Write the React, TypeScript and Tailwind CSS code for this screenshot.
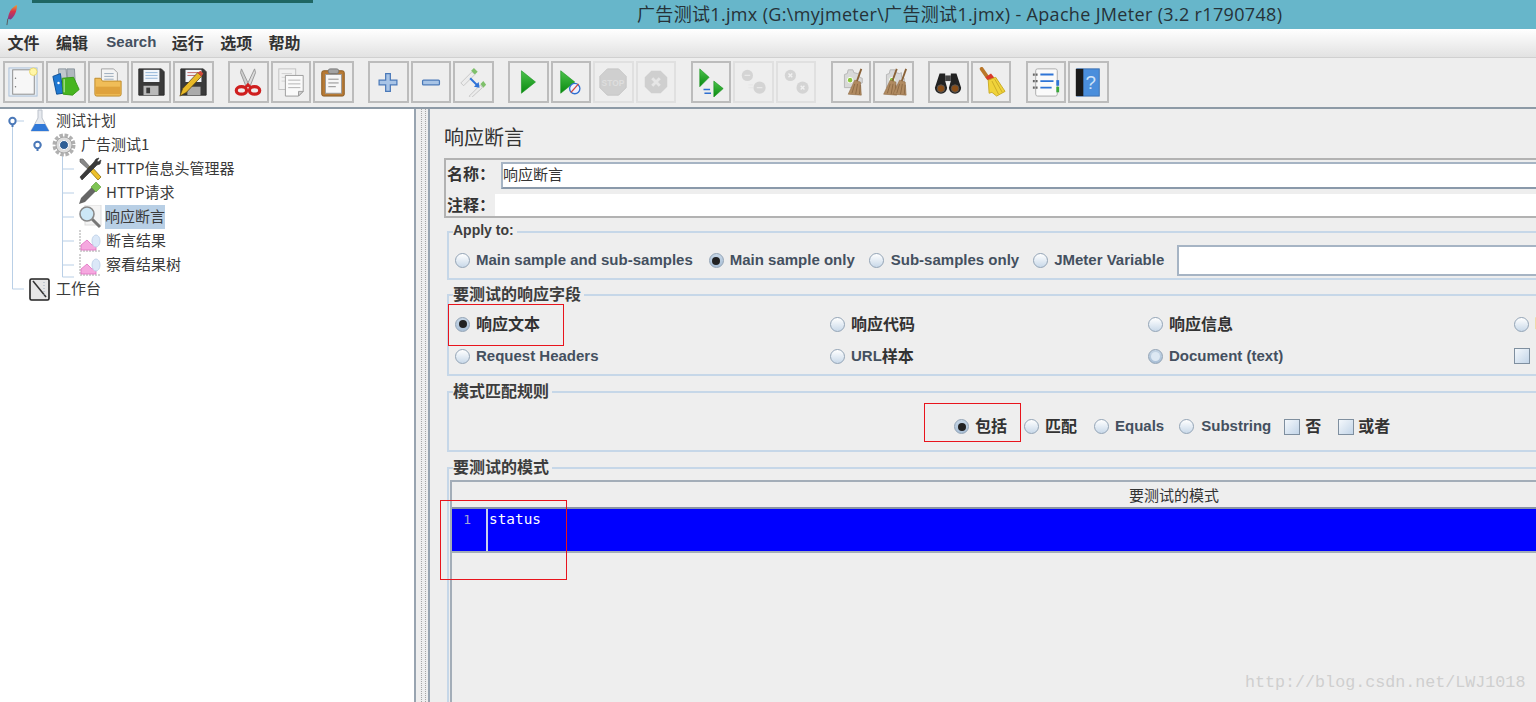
import React from 'react';

const cjk = "font-['Noto_Sans_CJK_SC','Liberation_Sans',sans-serif]";
const ui = "font-['Liberation_Sans','Noto_Sans_CJK_SC',sans-serif]";

/* ---------- toolbar icons, all on a 32 box ---------- */
const Gear = ({ c = '#d8d8d8' }: { c?: string }) => (
  <g>
    <path d="M9 8l3-1 1-4h5l1 3 4 1 2-1v5l3 1v5l-3 1v4H9z" fill={c} stroke="#b5b5b5" strokeWidth="1" />
    <circle cx="15" cy="14" r="3" fill="#8cc63f" stroke="#fff" />
  </g>
);

const Broom = ({ x = 0, c = '#b08a60' }: { x?: number; c?: string }) => (
  <g transform={`translate(${x} 0)`}>
    <path d="M27 2l-5 14" stroke="#8a6238" strokeWidth="2" />
    <path d="M20 14l6 2 1 14-14-1z" fill={c} stroke="#8d6a44" strokeWidth=".6" />
    <path d="M20 18l-3 10M23 18l-2 11M26 19l-1 10" stroke="#7d5c38" strokeWidth=".7" />
  </g>
);

const icons: Record<string, React.ReactNode> = {
  newPlan: (
    <>
      <rect x="1" y="1" width="30" height="30" fill="#e7edf3" stroke="#a9c0d8" />
      <rect x="5" y="3" width="23" height="26" fill="#f7f7f7" stroke="#8a8a8a" />
      <circle cx="8" cy="12" r=".8" fill="#777" />
      <circle cx="8" cy="21" r=".8" fill="#777" />
      <circle cx="27" cy="5" r="4" fill="#fff6a8" stroke="#e9d66a" />
    </>
  ),
  templates: (
    <>
      <path d="M8 2h8l2 20H9z" fill="#c2c8ce" stroke="#8a939c" />
      <path d="M17 2h8l1 18h-8z" fill="#b1b8bf" stroke="#8a939c" />
      <path d="M2 10l8-3 3 21-7 1z" fill="#1e78d2" stroke="#0d4f94" />
      <path d="M12 12l12-1 6 13-7 6-10-1z" fill="#47b51f" stroke="#3a9a18" />
      <path d="M14 13v14" stroke="#d5f0c4" />
      <circle cx="8" cy="17" r="1.3" fill="#fff" />
    </>
  ),
  open: (
    <>
      <path d="M9 2h13l4 4v11H9z" fill="#f4f4f4" stroke="#a0a0a0" />
      <path d="M12 7h10M12 10h10M12 13h10" stroke="#9ab" />
      <path d="M2 12h6l2 3h20v14a2 2 0 0 1-2 2H4a2 2 0 0 1-2-2z" fill="#f0bd58" stroke="#bd8a2a" />
      <path d="M3 21h26v8H3z" fill="#dfa23c" />
    </>
  ),
  save: (
    <>
      <path d="M3 2h24l3 3v25H3z" fill="#3a3a3a" stroke="#2a2a2a" />
      <rect x="8" y="3" width="17" height="13" fill="#f2f6fb" />
      <path d="M10 6h13M10 9h13M10 12h13" stroke="#8fb2d6" />
      <rect x="8" y="20" width="16" height="10" fill="#b9b9b9" />
      <rect x="11" y="22" width="4" height="6" fill="#3a3a3a" />
    </>
  ),
  saveAs: (
    <>
      <path d="M3 2h24l3 3v25H3z" fill="#3a3a3a" stroke="#2a2a2a" />
      <rect x="8" y="3" width="17" height="13" fill="#f2f6fb" />
      <path d="M10 6h13M10 9h13" stroke="#c06060" />
      <rect x="10" y="21" width="14" height="9" fill="#aaa" />
      <path d="M2 31l3-8L21 6l4 4L9 27z" fill="#e8b928" stroke="#5c4510" strokeWidth=".8" />
      <path d="M21 6l4 4 2-3-3-3z" fill="#d04a3a" />
    </>
  ),
  cut: (
    <>
      <path d="M9 2l8 17-3 2L8 6z" fill="#cfcfcf" stroke="#969696" />
      <path d="M23 2l-8 17 3 2 6-15z" fill="#dcdcdc" stroke="#969696" />
      <ellipse cx="9" cy="25" rx="5.500" ry="4" fill="none" stroke="#cf1f1f" strokeWidth="3.4" />
      <ellipse cx="23" cy="25" rx="5.500" ry="4" fill="none" stroke="#cf1f1f" strokeWidth="3.4" />
      <path d="M13 22l3-3 3 3" stroke="#cf1f1f" strokeWidth="3" fill="none" />
    </>
  ),
  copy: (
    <>
      <rect x="3" y="2" width="18" height="22" fill="#f1f1f1" stroke="#c0c0c0" />
      <path d="M6 7h11M6 11h11M6 15h11" stroke="#d0d0d0" />
      <path d="M10 9h19v17l-5 5H10z" fill="#fafafa" stroke="#9a9a9a" />
      <path d="M13 14h13M13 18h13M13 22h13" stroke="#b0b0b0" />
      <path d="M24 31v-5h5z" fill="#d0d0d0" stroke="#9a9a9a" />
    </>
  ),
  paste: (
    <>
      <rect x="4" y="4" width="24" height="27" rx="2" fill="#b77a35" stroke="#85571f" />
      <rect x="8" y="8" width="17" height="20" fill="#f7f7f7" stroke="#999" />
      <path d="M11 13h11M11 17h11M11 21h8" stroke="#8a8a8a" />
      <rect x="11" y="2" width="11" height="5" rx="2" fill="#a3a3a3" stroke="#777" />
    </>
  ),
  plus: <path d="M13.500 7h5v7h7v5h-7v7h-5v-7h-7v-5h7z" fill="#a8c4e6" stroke="#4a79b8" strokeWidth="1.300" />,
  minus: <rect x="7" y="14" width="18" height="5" rx="1" fill="#a8c4e6" stroke="#4a79b8" strokeWidth="1.300" />,
  toggle: (
    <>
      <path d="M3 17L15 5l3 3L6 20z" fill="#ececec" stroke="#c4c4c4" />
      <path d="M14 4l3-3 4 4-3 3z" fill="#7fc06b" />
      <path d="M12 31l12-12 2 3-12 11z" fill="#ececec" stroke="#c4c4c4" />
      <path d="M24 18l3-3 3 4-3 3z" fill="#7fc06b" />
      <path d="M13 12l8 8" stroke="#2f73d8" strokeWidth="2" />
      <path d="M17 21l6 1-1-6z" fill="#2f73d8" />
    </>
  ),
  start: (
    <>
      <defs>
        <linearGradient id="g1" x1="0" y1="0" x2="0" y2="1">
          <stop offset="0" stopColor="#4cc34c" />
          <stop offset="1" stopColor="#0a8a10" />
        </linearGradient>
      </defs>
      <path d="M9 4l15 12L9 28z" fill="url(#g1)" stroke="#0f8f15" strokeWidth=".6" />
    </>
  ),
  startNoPause: (
    <>
      <path d="M5 4l15 12L5 28z" fill="url(#g1)" stroke="#0f8f15" strokeWidth=".6" />
      <circle cx="20" cy="23" r="5.500" fill="#eef" stroke="#2f6fd0" strokeWidth="1.400" />
      <path d="M16 27l8-9" stroke="#d0483a" strokeWidth="1.400" />
    </>
  ),
  stop: (
    <>
      <path d="M10 2h12l8 8v12l-8 8H10l-8-8V10z" fill="#cfcfcf" stroke="#c4c4c4" />
      <text x="16" y="20" textAnchor="middle" fontSize="9" fontWeight="700" fill="#dedede" fontFamily="Liberation Sans">STOP</text>
    </>
  ),
  shutdown: (
    <>
      <path d="M11 4h10l7 7v10l-7 7H11l-7-7V11z" fill="#cfcfcf" />
      <path d="M12 12l8 8M20 12l-8 8" stroke="#e6e6e6" strokeWidth="3" />
    </>
  ),
  remoteStart: (
    <>
      <path d="M4 2l10 9-10 10z" fill="url(#g1)" stroke="#0f8f15" strokeWidth=".6" />
      <path d="M19 15l10 8-10 9z" fill="url(#g1)" stroke="#0f8f15" strokeWidth=".6" />
      <path d="M8 24h7M16 28H9" stroke="#2f6fd0" strokeWidth="1.800" />
    </>
  ),
  remoteStop: (
    <>
      <circle cx="10" cy="9" r="6" fill="#d4d4d4" />
      <circle cx="23" cy="22" r="6.500" fill="#d4d4d4" />
      <path d="M7 9h6M20 22h6M11 19h5M11 22h5" stroke="#e8e8e8" strokeWidth="1.400" />
    </>
  ),
  remoteShutdown: (
    <>
      <circle cx="10" cy="9" r="6" fill="#d4d4d4" />
      <circle cx="23" cy="22" r="6.500" fill="#d4d4d4" />
      <path d="M8 7l4 4M12 7l-4 4M21 20l4 4M25 20l-4 4" stroke="#f0f0f0" strokeWidth="1.500" />
    </>
  ),
  clear: (
    <>
      <Gear />
      <Broom />
    </>
  ),
  clearAll: (
    <>
      <Gear />
      <Broom x={-7} />
      <Broom x={3} />
    </>
  ),
  search: (
    <>
      <rect x="13" y="9" width="6" height="6" fill="#444" />
      <path d="M7 7h6v8l2 7a6.500 6.500 0 1 1-13 0z" fill="#222" />
      <path d="M25 7h-6v8l-2 7a6.500 6.500 0 1 0 13 0z" fill="#222" />
      <circle cx="8.500" cy="23" r="4" fill="#8a4d16" stroke="#555" />
      <circle cx="23.500" cy="23" r="4" fill="#8a4d16" stroke="#555" />
    </>
  ),
  broom: (
    <>
      <path d="M6 2l7 10" stroke="#b9772a" strokeWidth="4" strokeLinecap="round" />
      <path d="M10 11l6-4 4 5-5 4z" fill="#d83a2a" />
      <path d="M13 14l8-3 10 15-9 5-5-4-3 1z" fill="#f0d33a" stroke="#c9aa26" />
      <path d="M17 15l7 14M20 13l8 14" stroke="#c9aa26" />
    </>
  ),
  functions: (
    <>
      <rect x="5" y="2" width="23" height="29" rx="2" fill="#fafafa" stroke="#aaa" />
      <path d="M10 8h14M10 15h14M10 22h12" stroke="#2e74d6" strokeWidth="2" />
      <path d="M2 8h6M2 15h6M2 22h6" stroke="#666" strokeWidth="2.400" strokeDasharray="2 1" />
      <rect x="27" y="14" width="3" height="6" fill="#2e74d6" />
      <rect x="27" y="21" width="3" height="6" fill="#3aa83a" />
    </>
  ),
  help: (
    <>
      <rect x="4" y="2" width="24" height="29" fill="#4a8edc" stroke="#3a70b0" />
      <rect x="3" y="2" width="8" height="29" fill="#1a1a1a" />
      <text x="19" y="23" textAnchor="middle" fontSize="20" fill="#cfe3f8" fontFamily="Liberation Sans">?</text>
    </>
  ),
};

const toolbarGroups: { id: string; off?: boolean }[][] = [
  [{ id: 'newPlan' }, { id: 'templates' }, { id: 'open' }, { id: 'save' }, { id: 'saveAs' }],
  [{ id: 'cut' }, { id: 'copy' }, { id: 'paste' }],
  [{ id: 'plus' }, { id: 'minus' }, { id: 'toggle' }],
  [{ id: 'start' }, { id: 'startNoPause' }, { id: 'stop', off: true }, { id: 'shutdown', off: true }],
  [{ id: 'remoteStart' }, { id: 'remoteStop', off: true }, { id: 'remoteShutdown', off: true }],
  [{ id: 'clear' }, { id: 'clearAll' }],
  [{ id: 'search' }, { id: 'broom' }],
  [{ id: 'functions' }, { id: 'help' }],
];

const ToolButton = ({ id, off }: { id: string; off?: boolean }) => (
  <div className={`flex h-[42px] w-[40.5px] items-center justify-center border-2 bg-[#eeeeee] ${off ? 'border-[#e0e0e0]' : 'border-[#bcbcbc]'}`}>
    <svg viewBox="0 0 32 32" className="h-[30px] w-[30px]">{icons[id]}</svg>
  </div>
);

/* ---------- tree icons ---------- */
const Chart = () => (
  <svg viewBox="0 0 24 24" className="h-[24px] w-[24px]">
    <path d="M2 1v21h21" fill="none" stroke="#a5a5a5" strokeDasharray="2 1" />
    <path d="M3 21v-5l6-5 5 5 4-2v7z" fill="#f5a8df" stroke="#e070c0" strokeWidth=".8" />
    <ellipse cx="18" cy="12" rx="4" ry="6" fill="#dbe8f8" stroke="#c2d4ea" />
  </svg>
);

const treeIcons: Record<string, React.ReactNode> = {
  flask: (
    <svg viewBox="0 0 24 24" className="h-[24px] w-[24px]">
      <path d="M10 1h4v8l7 13H3l7-13z" fill="#e6e9ee" stroke="#bcc2cb" />
      <path d="M7 15h10l4 7H3z" fill="#2f78d8" />
    </svg>
  ),
  gear: (
    <svg viewBox="0 0 24 24" className="h-[24px] w-[24px]">
      <circle cx="12" cy="12" r="9.500" fill="none" stroke="#b0b0b0" strokeWidth="4" strokeDasharray="3.400 1.600" />
      <circle cx="12" cy="12" r="8" fill="#dcdcdc" stroke="#a5a5a5" />
      <circle cx="12" cy="12" r="4.500" fill="#2f5f96" stroke="#fff" />
    </svg>
  ),
  wrench: (
    <svg viewBox="0 0 24 24" className="h-[24px] w-[24px]">
      <path d="M2 2l3 0 8 9-2 2-9-8z" fill="#888" stroke="#555" strokeWidth=".6" />
      <path d="M11 10l2-1 10 11-3 3-10-11z" fill="#eec02a" stroke="#8a6d10" strokeWidth=".8" />
      <path d="M21 1l-3 1-2 3L2 20l2 3L19 8l3-1 1-4-3 2-1-1z" fill="#3a3a3a" stroke="#2a2a2a" strokeWidth=".6" />
    </svg>
  ),
  dropper: (
    <svg viewBox="0 0 24 24" className="h-[24px] w-[24px]">
      <path d="M1 23l2-6L14 6l4 4L7 21z" fill="#666" />
      <path d="M14 5l4-4 5 5-4 4-1 1-5-5z" fill="#7fc455" stroke="#5b9838" strokeWidth=".6" />
    </svg>
  ),
  glass: (
    <svg viewBox="0 0 24 24" className="h-[24px] w-[24px]">
      <rect x="7" y="0" width="16" height="20" fill="#f4f4f4" stroke="#ddd" />
      <path d="M14 14l8 8" stroke="#777" strokeWidth="3" />
      <circle cx="9" cy="9" r="7" fill="#cce7f6" stroke="#888" strokeWidth="1.600" />
    </svg>
  ),
  chart: <Chart />,
  note: (
    <svg viewBox="0 0 24 24" className="h-[24px] w-[24px]">
      <rect x="2" y="2" width="19" height="21" rx="1.500" fill="#e6e6e6" stroke="#222" strokeWidth="1.600" />
      <path d="M5 4l13 16" stroke="#333" strokeWidth="1.600" />
      <path d="M16 5v14" stroke="#9ab" strokeDasharray="1 2" />
    </svg>
  ),
};

const treeRows = [
  { icon: 'flask', label: '测试计划', iconX: 28, textX: 56 },
  { icon: 'gear', label: '广告测试1', iconX: 52, textX: 81 },
  { icon: 'wrench', label: 'HTTP信息头管理器', iconX: 78, textX: 106 },
  { icon: 'dropper', label: 'HTTP请求', iconX: 78, textX: 106 },
  { icon: 'glass', label: '响应断言', iconX: 78, textX: 105, selected: true },
  { icon: 'chart', label: '断言结果', iconX: 78, textX: 106 },
  { icon: 'chart', label: '察看结果树', iconX: 78, textX: 106 },
  { icon: 'note', label: '工作台', iconX: 28, textX: 56 },
];

const TreeRow = ({ icon, label, iconX, textX, selected }: (typeof treeRows)[number] & { selected?: boolean }) => (
  <div className="flex h-[24px] items-center" style={{ paddingLeft: iconX }}>
    <span className="w-[24px] shrink-0">{treeIcons[icon]}</span>
    <span
      className={`${cjk} h-[24px] text-[15px] leading-[21px] text-[#3a3a3a] ${selected ? 'bg-[#b8cfe5]' : ''}`}
      style={{ marginLeft: textX - iconX - 24 }}
    >
      {label}
    </span>
  </div>
);

/* ---------- form bits ---------- */
const Radio = ({ on, tint }: { on?: boolean; tint?: boolean }) => (
  <span
    className={`flex h-[15px] w-[15px] shrink-0 items-center justify-center rounded-full border border-[#93a4b6] bg-gradient-to-b ${
      on || tint ? 'from-[#c6d6e6] to-[#a9bfd6]' : 'from-[#ffffff] to-[#c9d9e9]'
    }`}
  >
    {on && <span className="h-[8px] w-[8px] rounded-full bg-[#222222]" />}
    {tint && <span className="h-[9px] w-[9px] rounded-full bg-[#dde8f3]" />}
  </span>
);

const Check = () => (
  <span className="block h-[16px] w-[16px] shrink-0 border border-[#7f8f9f] bg-gradient-to-br from-[#f4f8fc] to-[#c3d5e8]" />
);

const Label = ({ children, className = '' }: { children: React.ReactNode; className?: string }) => (
  <span className={`${ui} whitespace-nowrap text-[15px] font-bold text-[#44505f] ${className}`}>{children}</span>
);

const CjkLabel = ({ children }: { children: React.ReactNode }) => (
  <span className={`${cjk} inline-block -translate-y-[1.500px] whitespace-nowrap text-[16px] font-bold leading-[20px] text-[#333333]`}>{children}</span>
);

const Group = ({ title, className, children }: { title: string; className: string; children: React.ReactNode }) => (
  <div className={`relative w-[1490px] border-2 border-[#c6d7e8] ${className}`}>
    <span
      className={`${
        title === 'Apply to:' ? `${ui} text-[14px]` : `${cjk} text-[16px]`
      } absolute -top-[13px] left-[4px] bg-[#eeeeee] pr-[3px] font-bold leading-[20px] text-[#3d3d3d]`}
    >
      {title}
    </span>
    {children}
  </div>
);

export default function App() {
  return (
    <div className="relative flex h-[702px] w-[1536px] flex-col overflow-hidden bg-[#eeeeee]">
      {/* Title bar */}
      <div className="flex h-[29px] shrink-0 items-center bg-[#67b6ca] pl-[5px]">
        <svg viewBox="0 0 14 24" className="h-[22px] w-[13px]">
          <defs>
            <linearGradient id="feather" x1="0" y1="0" x2="0" y2="1">
              <stop offset="0" stopColor="#f0a030" />
              <stop offset=".45" stopColor="#d9344a" />
              <stop offset="1" stopColor="#7a3a90" />
            </linearGradient>
          </defs>
          <path d="M13 1C8 3 4 8 3 16l3 1c4-3 7-9 7-16z" fill="url(#feather)" />
          <path d="M3 16l-1 7" stroke="#555" />
        </svg>
        <span className="ml-[619px] whitespace-nowrap font-['Open_Sans','Noto_Sans_CJK_SC',sans-serif] text-[18px] tracking-[0.33px] text-[#263238]">
          广告测试1.jmx (G:\myjmeter\广告测试1.jmx) - Apache JMeter (3.2 r1790748)
        </span>
      </div>
      <div className="absolute left-[32px] top-0 h-[3px] w-[281px] bg-[#1f6663]" />

      {/* Menu */}
      <div className="flex h-[28px] shrink-0 items-center gap-[16.400px] bg-gradient-to-b from-[#ffffff] to-[#e2e2e2] pb-[2px] pl-[7.500px]">
        {['文件', '编辑'].map((m) => (
          <span key={m} className={`${cjk} text-[16px] font-bold text-[#333333]`}>{m}</span>
        ))}
        <span className={`${ui} ml-[2px] mr-[-1px] text-[15px] font-bold text-[#44505f]`}>Search</span>
        {['运行', '选项', '帮助'].map((m) => (
          <span key={m} className={`${cjk} text-[16px] font-bold text-[#333333]`}>{m}</span>
        ))}
      </div>

      {/* Toolbar */}
      <div className="flex h-[50px] shrink-0 items-center gap-[14.500px] border-t border-[#d0d0d0] bg-[#eeeeee] pb-[1px] pl-[3px]">
        {toolbarGroups.map((g, i) => (
          <div key={i} className="flex gap-[2px]">
            {g.map((b) => (
              <ToolButton key={b.id} id={b.id} off={b.off} />
            ))}
          </div>
        ))}
      </div>
      <div className="h-[2px] shrink-0 bg-[#8d9aa6]" />

      {/* Split pane */}
      <div className="flex min-h-0 flex-1">
        <div className="relative w-[416px] shrink-0 border-r-2 border-[#98a4b0] bg-white">
          <svg className="absolute left-0 top-0 h-[200px] w-[100px]" viewBox="0 0 100 200">
            <path d="M12.500 12v168H24M17 12h7M42 36h-4.500M62.500 36v132H74M62 60h12M62 84h12M62 108h12M62 132h12M62 156h12" fill="none" stroke="#b9cfe6" />
            <path d="M12.500 18v-6M37.500 42v-6" stroke="#4a78b8" strokeWidth="2" />
            <circle cx="12.500" cy="12" r="3.200" fill="#fff" stroke="#4a78b8" strokeWidth="2" />
            <circle cx="37.500" cy="36" r="3.200" fill="#fff" stroke="#4a78b8" strokeWidth="2" />
          </svg>
          <div className="relative">
            {treeRows.map((r, i) => (
              <TreeRow key={i} {...r} />
            ))}
          </div>
        </div>

        {/* Drag divider with a dotted grip */}
        <div className="flex w-[14px] shrink-0 justify-center border-r-2 border-[#98a4b0] bg-[#eeeeee] pl-[2px]">
          <div className="h-full w-[5px] border-x border-dotted border-[#a6a6a6]" />
        </div>

        <div className="min-w-0 flex-1 overflow-hidden pl-[14px]">
          <div className={`${cjk} mt-[14px] h-[28px] text-[20px] leading-[28px] text-[#333333]`}>响应断言</div>

          <div className="mt-[7px] h-[60px] w-[1494px] border-2 border-[#b2b2b2] pl-[1px]">
            <div className="flex h-[30px] items-center">
              <span className="w-[54px]"><CjkLabel>名称：</CjkLabel></span>
              <div className={`${cjk} h-[27px] flex-1 border-2 border-[#a6b4c4] border-b-[#8a99aa] bg-white text-[15px] leading-[20px] text-[#333333]`}>响应断言</div>
            </div>
            <div className="mt-[4px] flex h-[22px] items-center">
              <span className="w-[48px] pt-[1px]"><CjkLabel>注释：</CjkLabel></span>
              <div className="h-[22px] flex-1 bg-white" />
            </div>
          </div>

          <Group title="Apply to:" className="ml-[3px] mt-[13px] h-[49px]">
            <div className="flex h-[45px] items-center pl-[6px] pt-[10px]">
              <Radio />
              <Label className="ml-[6px]">Main sample and sub-samples</Label>
              <span className="ml-[16px]"><Radio on /></span>
              <Label className="ml-[6px]">Main sample only</Label>
              <span className="ml-[14px]"><Radio /></span>
              <Label className="ml-[7px]">Sub-samples only</Label>
              <span className="ml-[14px]"><Radio /></span>
              <Label className="ml-[6px]">JMeter Variable</Label>
              <div className="ml-[13px] mt-[-1px] h-[31px] w-[400px] border-2 border-[#a6b4c4] bg-white" />
            </div>
          </Group>

          <Group title="要测试的响应字段" className="ml-[3px] mt-[14px] h-[82px]">
            <div className="grid grid-cols-[375px_318px_366px_100px] pl-[6px] pt-[12px]">
              {[
                [<Radio on />, <CjkLabel>响应文本</CjkLabel>],
                [<Radio />, <CjkLabel>响应代码</CjkLabel>],
                [<Radio />, <CjkLabel>响应信息</CjkLabel>],
                [<Radio />, <CjkLabel>响应头</CjkLabel>],
                [<Radio />, <Label>Request Headers</Label>],
                [<Radio />, <span className="flex items-center"><Label>URL</Label><CjkLabel>样本</CjkLabel></span>],
                [<Radio tint />, <Label>Document (text)</Label>],
                [<Check />, <Label>Ignore Status</Label>],
              ].map(([box, text], i) => (
                <div key={i} className="flex h-[32px] items-center gap-[6px]">
                  {box}
                  {text}
                </div>
              ))}
            </div>
          </Group>

          <Group title="模式匹配规则" className="ml-[3px] mt-[15px] h-[61px]">
            <div className="flex h-[57px] items-center pl-[505px] pt-[10px]">
              <Radio on />
              <span className="ml-[6px]"><CjkLabel>包括</CjkLabel></span>
              <span className="ml-[17px]"><Radio /></span>
              <span className="ml-[6px]"><CjkLabel>匹配</CjkLabel></span>
              <span className="ml-[17px]"><Radio /></span>
              <Label className="ml-[6px]">Equals</Label>
              <span className="ml-[15px]"><Radio /></span>
              <Label className="ml-[7px]">Substring</Label>
              <span className="ml-[13px]"><Check /></span>
              <span className="ml-[5px]"><CjkLabel>否</CjkLabel></span>
              <span className="ml-[17px]"><Check /></span>
              <span className="ml-[4px]"><CjkLabel>或者</CjkLabel></span>
            </div>
          </Group>

          <Group title="要测试的模式" className="ml-[3px] mt-[15px] h-[300px]">
            <div className="ml-[1px] mt-[11px] h-[280px] w-[1446px] border-l-2 border-t-2 border-[#a3adb8]">
              <div className={`${cjk} h-[25px] text-center text-[15px] leading-[26px] text-[#333333]`}>要测试的模式</div>
              <div className="flex h-[46px] border-y-2 border-t-[#8893a6] border-b-[#a3adb8] bg-[#0000ff]">
                <div className="w-[36px] border-r-2 border-[#c6d0f0] pr-[15px] pt-[1px] text-right font-['DejaVu_Sans_Mono',monospace] text-[13px] leading-[20px] text-[#a0a8d8]">1</div>
                <div className="pl-[1px] font-['DejaVu_Sans_Mono',monospace] text-[14.400px] leading-[20px] text-white">status</div>
              </div>
            </div>
          </Group>
        </div>
      </div>

      {/* Red annotation boxes drawn over the capture */}
      <div className="absolute left-[448px] top-[304px] h-[42px] w-[116px] border border-[#e8141c]" />
      <div className="absolute left-[924px] top-[403px] h-[39px] w-[97px] border border-[#e8141c]" />
      <div className="absolute left-[440px] top-[500px] h-[80px] w-[127px] border border-[#e8141c]" />

      {/* Blog watermark */}
      <div className="absolute left-[1245px] top-[672px] font-['Liberation_Mono',monospace] text-[16.700px] leading-[22px] text-[#cfcfcf]">
        http://blog.csdn.net/LWJ1018
      </div>
    </div>
  );
}
